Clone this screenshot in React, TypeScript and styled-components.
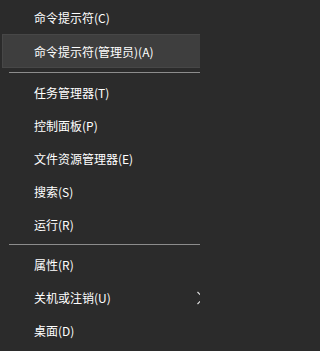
import React from "react";
import styled, { createGlobalStyle } from "styled-components";

const Global = createGlobalStyle`
  html, body { margin: 0; padding: 0; background: #2b2b2b; }
  body { width: 200px; height: 351px; overflow: hidden; }
`;

const Menu = styled.div`
  width: 200px;
  height: 351px;
  background: #2b2b2b;
  display: flex;
  flex-direction: column;
  font-family: "Microsoft YaHei UI", "Noto Sans CJK SC", "Noto Sans", sans-serif;
  font-size: 12px;
  color: #ffffff;
  overflow: hidden;
`;

const Item = styled.div<{ $h: number; $active?: boolean }>`
  position: relative;
  height: ${(p) => p.$h}px;
  margin-left: 2px;
  padding-left: 32px;
  display: flex;
  align-items: center;
  box-sizing: border-box;
  white-space: nowrap;
  background: ${(p) => (p.$active ? "#3e3e3e" : "transparent")};
  border: 1px solid ${(p) => (p.$active ? "#474747" : "transparent")};
  border-right: none;
  padding-left: 31px;
`;

const Separator = styled.div<{ $h: number }>`
  height: ${(p) => p.$h}px;
  display: flex;
  align-items: center;
  padding-left: 9px;
  &::after {
    content: "";
    flex: 1;
    height: 1px;
    background: #8c8c8c;
  }
`;

const Arrow = styled.svg`
  position: absolute;
  left: 193px;
  top: 50%;
  transform: translateY(-50%);
`;

export default function App() {
  return (
    <>
      <Global />
      <Menu>
        <Item $h={34}>命令提示符(C)</Item>
        <Item $h={34} $active>命令提示符(管理员)(A)</Item>
        <Separator $h={8} />
        <Item $h={33}>任务管理器(T)</Item>
        <Item $h={33}>控制面板(P)</Item>
        <Item $h={33}>文件资源管理器(E)</Item>
        <Item $h={33}>搜索(S)</Item>
        <Item $h={33}>运行(R)</Item>
        <Separator $h={7} />
        <Item $h={33}>属性(R)</Item>
        <Item $h={33}>
          关机或注销(U)
          <Arrow width="10" height="14" viewBox="0 0 10 14">
            <path d="M1.5 1 L7.5 7 L1.5 13" fill="none" stroke="#e0e0e0" strokeWidth="1.2" />
          </Arrow>
        </Item>
        <Item $h={33}>桌面(D)</Item>
      </Menu>
    </>
  );
}
